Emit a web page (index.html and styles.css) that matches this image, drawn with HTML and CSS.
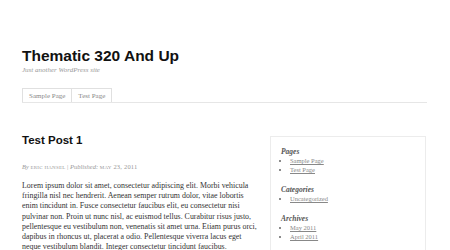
FILE: index.html
```html
<!DOCTYPE html>
<html lang="en">
<head>
  <meta charset="UTF-8">
  <title>Thematic 320 And Up</title>
  <link rel="stylesheet" href="styles.css">
</head>
<body>
  <div class="wrapper">
    <!-- Header -->
    <div class="header">
      <h1 class="blog-title">Thematic 320 And Up</h1>
      <div class="blog-description">Just another WordPress site</div>
    </div>

    <!-- Menu -->
    <ul class="menu">
      <li><a href="#">Sample Page</a></li>
      <li><a href="#">Test Page</a></li>
    </ul>

    <div class="main">
      <div class="content">
        <h2 class="entry-title">Test Post 1</h2>
        <div class="entry-meta">
          <em>By</em> <span class="sc">Eric Hansel</span> | <em>Published:</em> <span class="sc">May 23, 2011</span>
        </div>
        <p class="entry-content">Lorem ipsum dolor sit amet, consectetur adipiscing elit. Morbi vehicula fringilla nisl nec hendrerit. Aenean semper rutrum dolor, vitae lobortis enim tincidunt in. Fusce consectetur faucibus elit, eu consectetur nisi pulvinar non. Proin ut nunc nisl, ac euismod tellus. Curabitur risus justo, pellentesque eu vestibulum non, venenatis sit amet urna. Etiam purus orci, dapibus in rhoncus ut, placerat a odio. Pellentesque viverra lacus eget neque vestibulum blandit. Integer consectetur tincidunt faucibus.</p>
      </div>

      <div class="sidebar">
        <h3>Pages</h3>
        <ul>
          <li><a href="#">Sample Page</a></li>
          <li><a href="#">Test Page</a></li>
        </ul>
        <h3>Categories</h3>
        <ul>
          <li><a href="#">Uncategorized</a></li>
        </ul>
        <h3>Archives</h3>
        <ul>
          <li><a href="#">May 2011</a></li>
          <li><a href="#">April 2011</a></li>
        </ul>
      </div>
    </div>
  </div>
</body>
</html>
```

FILE: styles.css
```css
body {
  margin: 0;
  padding: 0;
  background-color: #ffffff;
  color: #333333;
  font-family: "Liberation Serif", Georgia, serif;
}
.wrapper {
  width: 405px;
  margin-left: 22px;
}
.header {
  padding-top: 47px;
}
.blog-title {
  margin: 0;
  font-family: "Liberation Sans", Arial, sans-serif;
  font-size: 15.5px;
  line-height: 18px;
  color: #111111;
}
.blog-description {
  margin-top: 1px;
  font-size: 7px;
  font-style: italic;
  color: #999999;
}
.menu {
  list-style: none;
  margin: 14px 0 0 0;
  padding: 0;
  display: flex;
  border-bottom: 1px solid #e6e6e6;
}
.menu li {
  border: 1px solid #e0e0e0;
  border-bottom: none;
  border-right: none;
}
.menu li:last-child {
  border-right: 1px solid #e0e0e0;
}
.menu li a {
  display: block;
  padding: 3px 6px 2px;
  font-size: 7px;
  line-height: 8px;
  color: #888888;
  text-decoration: none;
}
.main {
  display: flex;
  gap: 10px;
  margin-top: 30px;
}
.content {
  width: 238px;
}
.entry-title {
  margin: 0;
  font-family: "Liberation Sans", Arial, sans-serif;
  font-size: 11.5px;
  line-height: 14px;
  color: #111111;
}
.entry-meta {
  margin-top: 16px;
  font-size: 6.5px;
  color: #999999;
}
.entry-meta .sc {
  font-variant: small-caps;
  text-transform: lowercase;
  letter-spacing: 0.2px;
}
.entry-content {
  margin: 11px 0 0 0;
  font-size: 7.9px;
  line-height: 10.2px;
  color: #333333;
}
.sidebar {
  width: 144px;
  border: 1px solid #ececec;
  padding: 10px 0 0 10px;
  margin-top: 3px;
  height: 120px;
}
.sidebar h3 {
  margin: 0;
  font-size: 7.5px;
  font-style: italic;
  line-height: 9px;
  color: #555555;
}
.sidebar ul {
  margin: 0 0 11px 0;
  padding-left: 9px;
  font-size: 6.5px;
  line-height: 9px;
}
.sidebar ul li {
  color: #666666;
}
.sidebar ul li a {
  color: #888888;
}
```
